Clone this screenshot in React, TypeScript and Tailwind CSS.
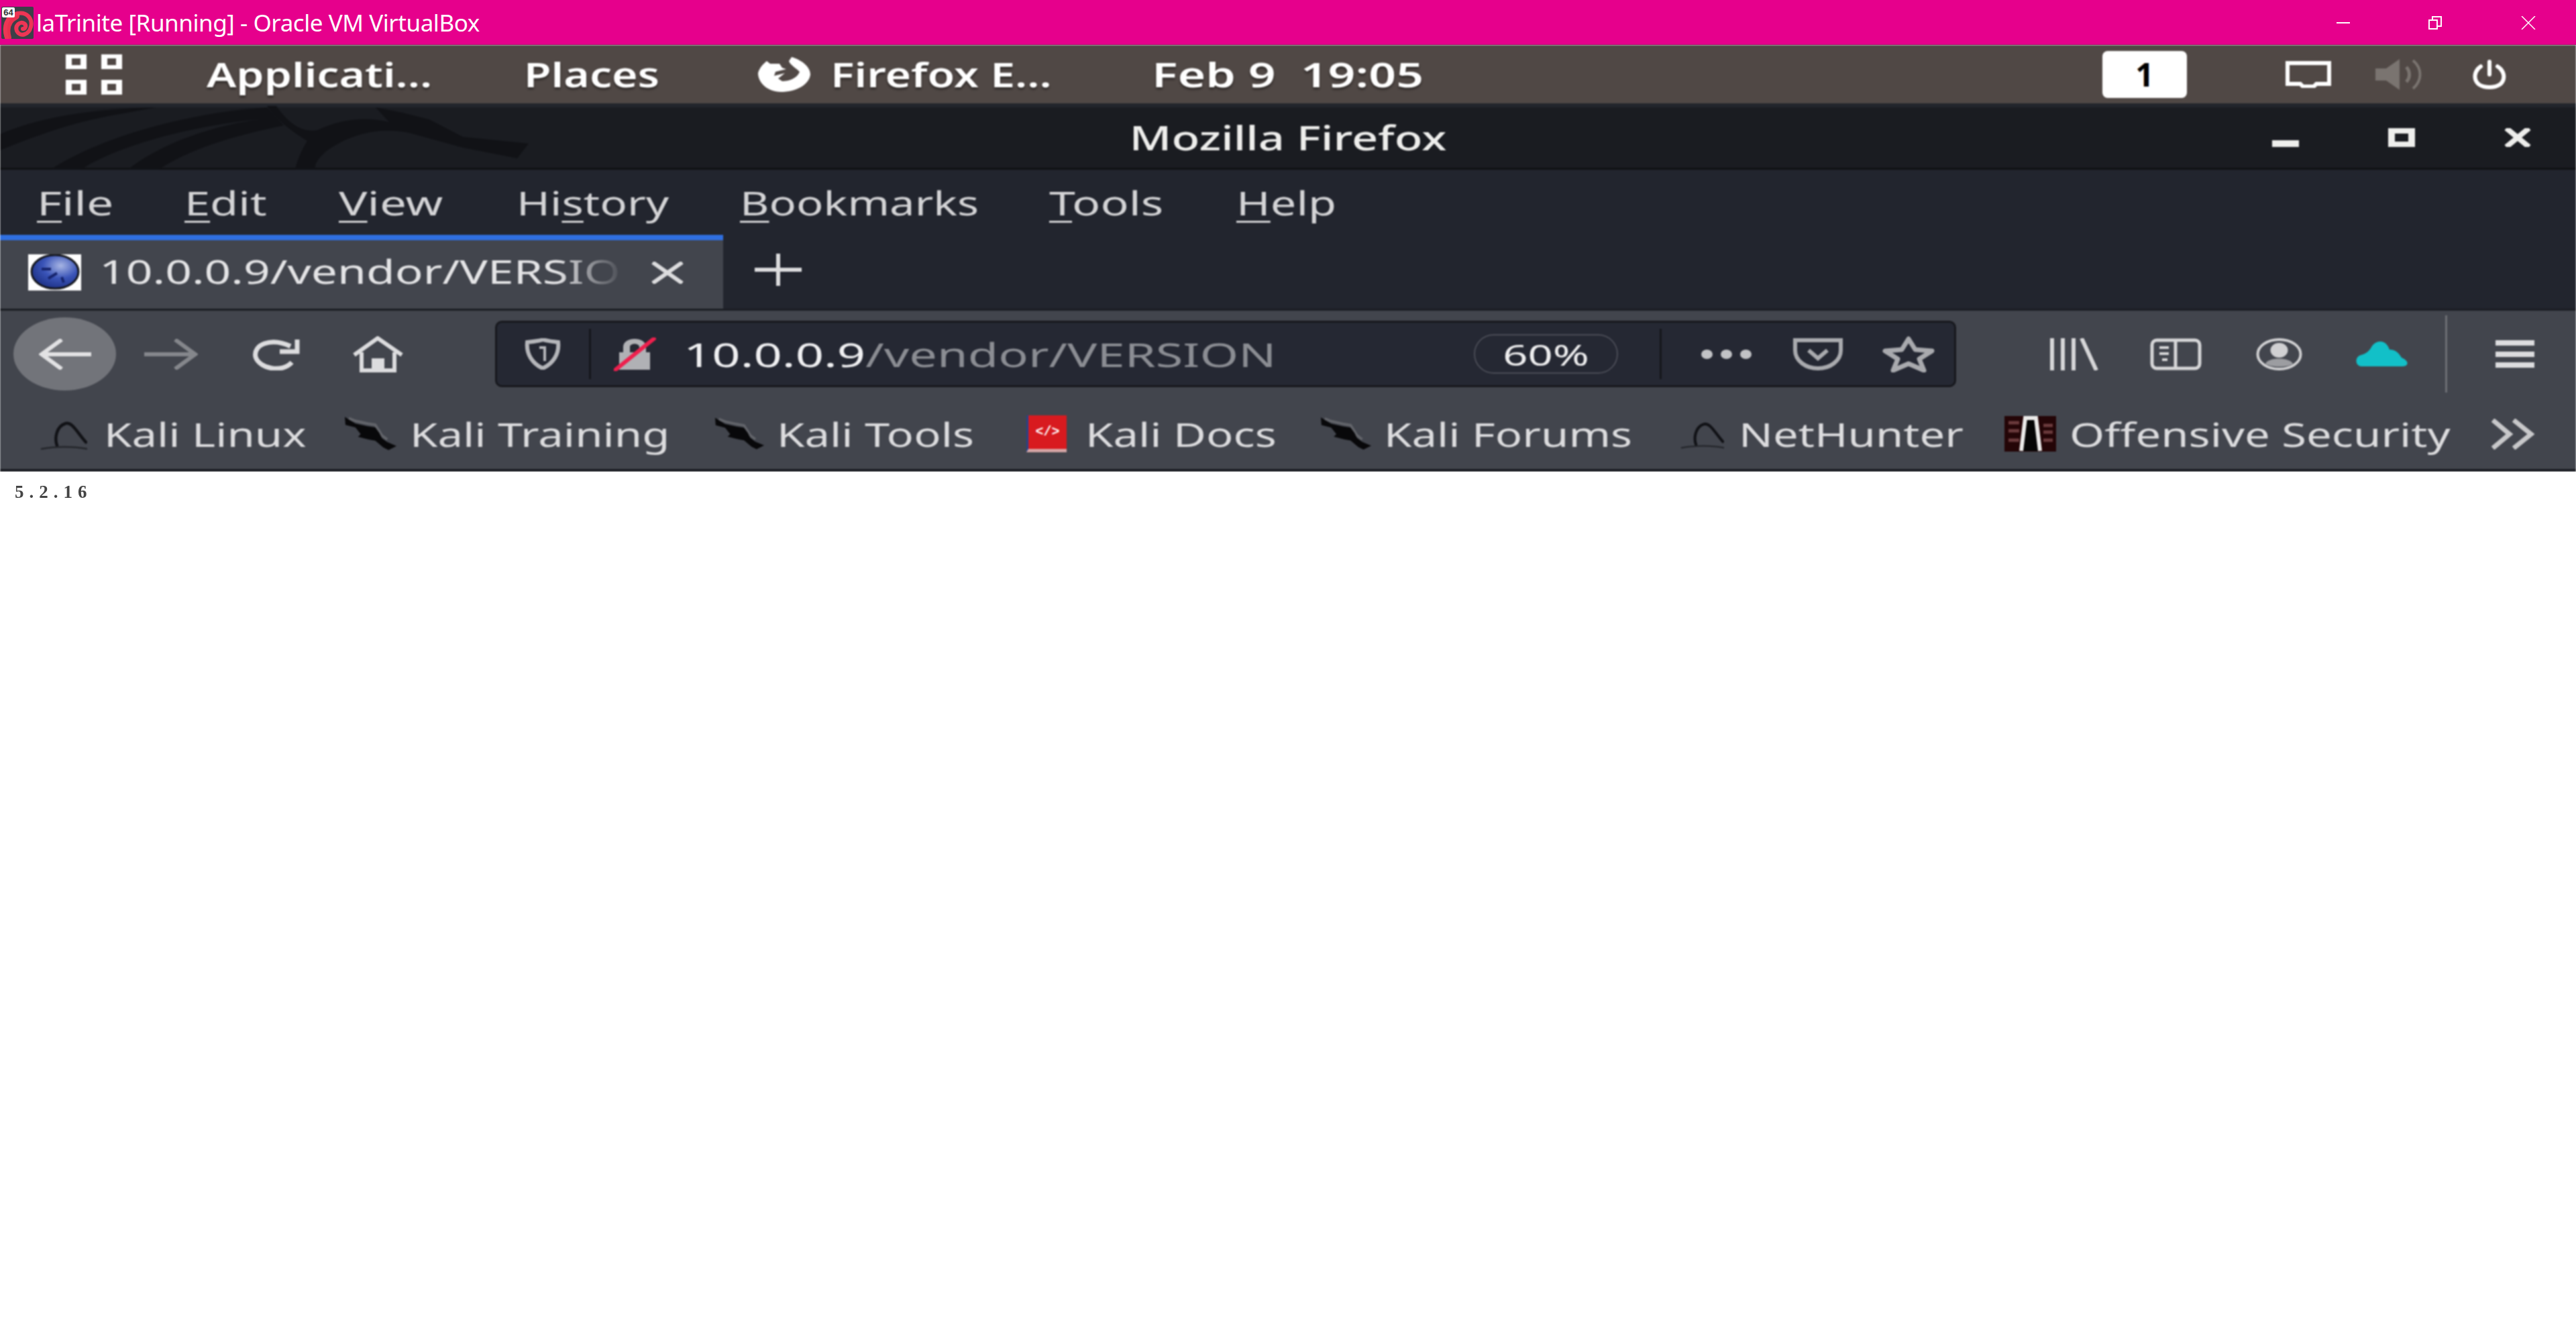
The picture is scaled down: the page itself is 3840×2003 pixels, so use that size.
import React from "react";

const Dagger = () => (
  <svg viewBox="0 0 80 55" className="h-[55px] w-full">
    <path d="M7 4 L17 8 L35 12 L47 14 L57 30 L65 36" fill="none" stroke="#62646a" strokeWidth="4" />
    <path d="M1 2 L7 6 L17 12 L35 16 L47 18 L53 26 L57 34 L65 40 L79 46 L67 52 L59 48 L47 38 L37 36 L21 32 L25 28 L17 18 L2 14 Z" fill="#08080a" />
  </svg>
);

const KaliBird = () => (
  <svg viewBox="0 0 70 55" className="h-[55px] w-full" fill="none" stroke="#111216" strokeLinecap="round">
    <path d="M25 45 C21 34 24 16 38 12 C48 10 54 24 68 40" strokeWidth="4.5" />
    <path d="M2 50 C22 46 50 46 70 50" strokeWidth="2.5" stroke="#23252a" />
  </svg>
);

function VBoxIcon() {
  return (
    <div className="relative ml-[2px] h-[48px] w-[48px] shrink-0 rounded-[2px] bg-[#3c4048]">
      <svg viewBox="0 0 48 48" className="h-full w-full" fill="none" strokeLinecap="round">
        <path d="M10 46 C6 32 10 20 22 14" stroke="#e8304f" strokeWidth="10" />
        <path d="M8 46 C3 32 6 14 24 10 C38 7 47 18 44 30 C41 42 28 46 23 36 C20 28 28 21 34 25 C38 28 36 33 32 33" stroke="#ee3555" strokeWidth="6" />
      </svg>
      <div className="absolute left-[1px] top-[1px] flex h-[15px] w-[19px] items-center justify-center rounded-[2px] bg-white font-['Liberation_Sans',sans-serif] text-[13px] font-bold leading-none text-[#333]">
        64
      </div>
    </div>
  );
}

function MenuText({ s, children }: { s: string; children: React.ReactNode }) {
  return <div className={`${s} origin-left whitespace-nowrap`}>{children}</div>;
}

function Menu({ w, ml, s, u, rest }: { w: string; ml: string; s: string; u: string; rest: string }) {
  return (
    <div className={`${w} ${ml} shrink-0`}>
      <MenuText s={s}>
        <span className="underline decoration-[3px] underline-offset-[8px]">{u}</span>
        {rest}
      </MenuText>
    </div>
  );
}

function Mark({ w, ml, children }: { w: string; ml: string; children: React.ReactNode }) {
  return (
    <div className={`${w} ${ml} shrink-0`}>
      <div className="origin-left scale-x-[1.34] whitespace-nowrap">{children}</div>
    </div>
  );
}

function PanelText({ w, ml, children }: { w: string; ml: string; children: React.ReactNode }) {
  return (
    <div className={`${w} ${ml} shrink-0`}>
      <div className="origin-left scale-x-[1.32] whitespace-pre">{children}</div>
    </div>
  );
}

export default function App() {
  return (
    <div className="flex h-[2003px] w-[3840px] flex-col overflow-hidden bg-white font-['Noto_Sans',sans-serif]">
      {/* VirtualBox title bar */}
      <header className="flex h-[67px] shrink-0 items-center bg-[#e6008c] text-white">
        <VBoxIcon />
        <div className="ml-[4px] w-[664px] whitespace-nowrap text-[35px] leading-none tracking-[-0.45px]">
          laTrinite [Running] - Oracle VM VirtualBox
        </div>
        <div className="ml-auto flex items-center pr-[60px]">
          <div className="h-[2px] w-[20px] bg-white" />
          <svg viewBox="0 0 20 20" className="ml-[117px] h-[20px] w-[20px]" fill="none" stroke="#fff" strokeWidth="2">
            <path d="M1 6 H13 V19 H1 Z M6 6 V1 H19 V15 H13" />
          </svg>
          <svg viewBox="0 0 22 20" className="ml-[118px] h-[20px] w-[22px]" fill="none" stroke="#fff" strokeWidth="1.5">
            <path d="M1 0 L21 20 M21 0 L1 20" />
          </svg>
        </div>
      </header>

      <div className="flex flex-col blur-[1px]">
        {/* GNOME panel */}
        <div className="flex h-[87px] shrink-0 items-center bg-[#504845] pl-[98px] text-[50px] font-semibold leading-none text-white [text-shadow:0_3px_3px_rgba(0,0,0,0.45)]">
          <div className="grid w-[84px] shrink-0 grid-cols-[31px_31px] justify-between gap-y-[16px]">
            <div className="h-[22px] border-x-[9px] border-y-[6px] border-white" />
            <div className="h-[22px] border-x-[9px] border-y-[6px] border-white" />
            <div className="h-[22px] border-x-[9px] border-y-[6px] border-white" />
            <div className="h-[22px] border-x-[9px] border-y-[6px] border-white" />
          </div>
          <PanelText w="w-[335px]" ml="ml-[126px]">Applicati...</PanelText>
          <PanelText w="w-[201px]" ml="ml-[138px]">Places</PanelText>
          <svg viewBox="0 0 120 80" className="ml-[128px] h-[80px] w-[120px] shrink-0">
            <path fill="#fff" d="M33 20 L38 24 L52 24 L56 30 L62 32 L46 36 L44 42 L60 38 L50 46 L56 50 C66 50 78 46 82 36 C76 30 68 26 66 20 L70 14 C84 18 98 28 98 40 C96 56 76 66 54 66 C34 66 20 52 20 38 C22 30 28 24 33 20 Z" />
          </svg>
          <PanelText w="w-[329px]" ml="ml-[8px]">Firefox E...</PanelText>
          <div className="ml-[150px] w-[403px] shrink-0">
            <div className="origin-left scale-x-[1.43] whitespace-pre">Feb 9  19:05</div>
          </div>
          <div className="ml-auto flex items-center pr-[100px]">
            <div className="flex h-[70px] w-[126px] shrink-0 items-center justify-center rounded-[8px] bg-white text-[48px] font-bold text-black [text-shadow:none]">
              1
            </div>
            <svg viewBox="0 0 68 40" className="ml-[147px] h-[40px] w-[68px] shrink-0" fill="none" stroke="#fff" strokeWidth="6">
              <path d="M3 3 H65 V34 H46 L42 38 H26 L22 34 H3 Z" />
            </svg>
            <svg viewBox="0 0 70 46" className="ml-[66px] h-[46px] w-[70px] shrink-0" fill="none">
              <path d="M0 14 H16 L36 0 V46 L16 32 H0 Z" fill="#7a7470" />
              <path d="M46 12 C52 18 52 28 46 34" stroke="#7a7470" strokeWidth="5" />
              <path d="M56 2 C70 14 70 32 56 44" stroke="#7a7470" strokeWidth="4" />
            </svg>
            <svg viewBox="0 0 59 44" className="ml-[70px] h-[44px] w-[59px] shrink-0" fill="none" stroke="#fff" strokeWidth="6" strokeLinecap="round">
              <path d="M17 10 C4 18 4 41 30 41 C56 41 56 18 42 10 M30 3 V22" />
            </svg>
          </div>
        </div>

        {/* Firefox title bar */}
        <div className="relative flex h-[99px] shrink-0 items-center border-t-[6px] border-t-[#22252c] border-b-[3px] border-b-[#101114] bg-[#1a1c21] text-[#eeeeec]">
          <svg viewBox="0 0 800 99" className="absolute left-0 top-[-6px] h-[99px] w-[800px]" fill="#111216">
            <path d="M0 46 C60 20 140 8 232 6 L190 14 C110 26 50 50 0 70 Z" />
            <path d="M75 99 C150 50 280 14 398 6 L423 33 C340 50 280 70 236 99 L190 99 C240 60 320 30 405 22 C300 30 180 60 120 99 Z" />
            <path d="M398 4 L412 4 C430 30 450 44 473 40 C510 22 550 20 580 28 L560 6 L600 14 L640 24 L690 50 L788 60 L771 82 L690 66 L610 44 C560 34 520 48 488 70 C476 80 468 90 470 99 L440 99 C444 80 452 66 458 56 C432 40 412 24 398 4 Z" />
          </svg>
          <div className="flex-1 pr-[67px]" />
          <div className="relative w-[468px] scale-x-[1.37] whitespace-nowrap text-center text-[50px] font-medium leading-none">Mozilla Firefox</div>
          <div className="relative flex flex-1 items-center justify-end pr-[67px]">
            <div className="mt-[18px] h-[10px] w-[40px] bg-[#eeeeec]" />
            <div className="ml-[133px] h-[28px] w-[40px] border-x-[10px] border-y-[8px] border-[#eeeeec]" />
            <svg viewBox="0 0 40 28" className="ml-[133px] h-[28px] w-[40px]" fill="none" stroke="#eeeeec" strokeWidth="8">
              <path d="M3 0 L37 28 M37 0 L3 28" />
            </svg>
          </div>
        </div>

        {/* Menu bar */}
        <div className="flex h-[97px] shrink-0 items-center bg-[#22252e] pl-[55px] text-[50px] leading-none text-[#d4d4d6]">
          <Menu w="w-[110px]" ml="ml-0" s="scale-x-[1.43]" u="F" rest="ile" />
          <Menu w="w-[123px]" ml="ml-[110px]" s="scale-x-[1.37]" u="E" rest="dit" />
          <Menu w="w-[155px]" ml="ml-[107px]" s="scale-x-[1.42]" u="V" rest="iew" />
          <div className="ml-[110px] w-[228px] shrink-0">
            <MenuText s="scale-x-[1.35]">
              Hi<span className="underline decoration-[3px] underline-offset-[8px]">s</span>tory
            </MenuText>
          </div>
          <Menu w="w-[350px]" ml="ml-[105px]" s="scale-x-[1.34]" u="B" rest="ookmarks" />
          <Menu w="w-[170px]" ml="ml-[111px]" s="scale-x-[1.4]" u="T" rest="ools" />
          <Menu w="w-[147px]" ml="ml-[109px]" s="scale-x-[1.37]" u="H" rest="elp" />
        </div>

        {/* Tab strip */}
        <div className="flex h-[110px] shrink-0 items-stretch bg-[#22252e]">
          <div className="flex w-[1078px] shrink-0 items-center border-t-[8px] border-t-[#2f6fe0] bg-[#42454d] pb-[6px] pl-[42px] text-[#e4e4e6]">
            <svg viewBox="0 0 79 54" className="h-[54px] w-[79px] shrink-0">
              <defs>
                <radialGradient id="ball" cx="0.62" cy="0.32" r="0.75">
                  <stop offset="0" stopColor="#a8b6e4" />
                  <stop offset="0.5" stopColor="#3a54b8" />
                  <stop offset="1" stopColor="#1a2d80" />
                </radialGradient>
              </defs>
              <rect width="79" height="54" fill="#fff" />
              <ellipse cx="40" cy="26" rx="35" ry="25" fill="url(#ball)" stroke="#14161c" strokeWidth="3" />
              <path d="M20 22 H34 M30 36 L43 28 M50 34 L53 42" fill="none" stroke="#16246c" strokeWidth="4" />
            </svg>
            <div className="relative mb-[4px] ml-[27px] h-[60px] w-[782px] shrink-0 overflow-hidden">
              <div className="origin-left scale-x-[1.39] whitespace-nowrap text-[50px] leading-[60px]">10.0.0.9/vendor/VERSION</div>
              <div className="absolute inset-y-0 right-0 w-[100px] bg-gradient-to-r from-transparent to-[#42454d]" />
            </div>
            <svg viewBox="0 0 50 33" className="ml-[40px] h-[33px] w-[50px] shrink-0" fill="none" stroke="#dcdcde" strokeWidth="6">
              <path d="M3 1 L47 32 M47 1 L3 32" />
            </svg>
          </div>
          <svg viewBox="0 0 70 48" className="mb-[6px] ml-[47px] h-[48px] w-[70px] shrink-0 self-center" fill="none" stroke="#dcdcde" strokeWidth="6">
            <path d="M0 24 H70 M35 0 V48" />
          </svg>
        </div>

        {/* Navigation toolbar */}
        <div className="flex h-[140px] shrink-0 items-center border-t-[3px] border-t-[#1b1d23] bg-[#42454d] pb-[8px] pl-[20px]">
          <div className="flex h-[109px] w-[153px] shrink-0 items-center justify-center rounded-[50%] bg-[#72747a]">
            <svg viewBox="0 0 78 46" className="h-[46px] w-[78px]" fill="none" stroke="#e2e2e4" strokeWidth="6">
              <path d="M78 23 H4 M34 1 L4 23 L34 45" />
            </svg>
          </div>
          <svg viewBox="0 0 80 46" className="ml-[42px] h-[46px] w-[80px] shrink-0" fill="none" stroke="#85878c" strokeWidth="6">
            <path d="M0 23 H76 M46 1 L76 23 L46 45" />
          </svg>
          <svg viewBox="0 0 73 48" className="ml-[80px] h-[48px] w-[73px] shrink-0" fill="none" stroke="#dcdcde" strokeWidth="7">
            <path d="M60 36 C46 52 12 46 6 28 C2 10 28 -2 58 12" />
            <path d="M68 2 V20 H42" />
          </svg>
          <svg viewBox="0 0 77 54" className="ml-[77px] h-[54px] w-[77px] shrink-0" fill="none" stroke="#dcdcde" strokeWidth="6">
            <path d="M3 28 L38 3 L74 28 M14 24 V51 H63 V24" />
            <path d="M32 52 V36 H45 V52" fill="#dcdcde" />
          </svg>

          {/* URL bar */}
          <div className="ml-[136px] flex h-[99px] w-[2178px] shrink-0 items-center rounded-[10px] border-[3px] border-[#17181d] bg-[#252833]">
            <svg viewBox="0 0 58 47" className="ml-[39px] h-[47px] w-[58px] shrink-0" fill="none" stroke="#b5b6ba" strokeWidth="6">
              <path d="M6 6 C18 5 28 3 29 2 C32 3 42 5 52 6 C54 24 44 38 29 45 C14 38 4 24 6 6 Z" />
              <path d="M24 14 H32 V34" strokeWidth="4" />
            </svg>
            <div className="ml-[40px] h-[75px] w-[3px] shrink-0 bg-[#15161b]" />
            <div className="relative ml-[34px] h-[50px] w-[63px] shrink-0">
              <svg viewBox="0 0 63 50" className="h-full w-full">
                <path d="M14 22 V14 C14 -2 48 -2 48 14 V22 H54 V48 H8 V22 Z M24 22 H38 V14 C38 8 24 8 24 14 Z" fill="#b0b1b5" fillRule="evenodd" />
                <path d="M0 50 L62 0" stroke="#ee1f4d" strokeWidth="6" />
              </svg>
            </div>
            <div className="ml-[41px] w-[875px] shrink-0 text-[50px] leading-none text-[#8b8d93]">
              <div className="origin-left scale-x-[1.48] whitespace-nowrap">
                <span className="text-[#f0f0f2]">10.0.0.9</span>/vendor/VERSION
              </div>
            </div>
            <div className="ml-[303px] flex h-[59px] w-[215px] shrink-0 items-center justify-center rounded-[30px] border-[2px] border-[#4a4c56] text-[44px] leading-none text-[#eeeeef]">
              <span className="scale-x-[1.48]">60%</span>
            </div>
            <div className="ml-[62px] h-[75px] w-[3px] shrink-0 bg-[#15161b]" />
            <div className="ml-[59px] flex w-[75px] shrink-0 justify-between">
              <div className="h-[14px] w-[17px] rounded-[50%] bg-[#c2c3c6]" />
              <div className="h-[14px] w-[17px] rounded-[50%] bg-[#c2c3c6]" />
              <div className="h-[14px] w-[17px] rounded-[50%] bg-[#c2c3c6]" />
            </div>
            <svg viewBox="0 0 76 48" className="ml-[61px] h-[48px] w-[76px] shrink-0" fill="none" stroke="#a9aaae" strokeWidth="6">
              <path d="M4 3 H72 V18 C72 34 56 45 38 45 C20 45 4 34 4 18 Z" />
              <path d="M24 18 L38 30 L52 18" />
            </svg>
            <svg viewBox="0 0 78 54" className="ml-[58px] h-[54px] w-[78px] shrink-0" fill="none" stroke="#a9aaae" strokeWidth="7" strokeLinejoin="round">
              <path d="M39 4 L49 20 L74 22 L55 34 L62 51 L39 41 L16 51 L23 34 L4 22 L29 20 Z" />
            </svg>
          </div>

          <svg viewBox="0 0 73 48" className="ml-[139px] h-[48px] w-[73px] shrink-0" fill="none" stroke="#d6d6d8" strokeWidth="6">
            <path d="M4 0 V48 M20 0 V48 M36 0 V48 M48 0 L70 48" />
          </svg>
          <svg viewBox="0 0 77 48" className="ml-[77px] h-[48px] w-[77px] shrink-0" fill="none" stroke="#d6d6d8" strokeWidth="5">
            <rect x="3" y="3" width="71" height="42" rx="7" />
            <path d="M38 3 V45" />
            <path d="M14 14 H28 M14 23 H28 M18 32 H26" strokeWidth="4" />
          </svg>
          <svg viewBox="0 0 69 48" className="ml-[81px] h-[48px] w-[69px] shrink-0" fill="none">
            <ellipse cx="34.5" cy="24" rx="32" ry="22" stroke="#d0d0d2" strokeWidth="4" />
            <ellipse cx="34.5" cy="18" rx="13" ry="11" fill="#d0d0d2" />
            <path d="M14 38 C18 28 50 28 55 38 C48 44 22 44 14 38 Z" fill="#9c9da1" />
          </svg>
          <svg viewBox="0 0 78 37" className="ml-[80px] h-[37px] w-[78px] shrink-0">
            <path d="M8 37 C-2 36 -2 22 8 20 C14 18 18 16 22 10 C26 2 32 0 36 0 C44 0 48 6 50 12 C60 12 64 18 68 24 C78 28 80 36 70 37 Z" fill="#12c0c8" />
          </svg>
          <div className="ml-[55px] h-[115px] w-[3px] shrink-0 bg-[#6d6f75]" />
          <div className="ml-[72px] flex h-[41px] w-[58px] shrink-0 flex-col justify-between">
            <div className="h-[8px] bg-[#dcdcde]" />
            <div className="h-[8px] bg-[#dcdcde]" />
            <div className="h-[8px] bg-[#dcdcde]" />
          </div>
        </div>

        {/* Bookmarks bar */}
        <div className="flex h-[103px] shrink-0 items-center border-b-[4px] border-b-[#1b1d23] bg-[#42454d] pb-[6px] pl-[60px] text-[50px] leading-none text-[#dcdcde]">
          <div className="w-[70px] shrink-0"><KaliBird /></div>
          <Mark w="w-[298px]" ml="ml-[25px]">Kali Linux</Mark>
          <div className="ml-[60px] w-[79px] shrink-0"><Dagger /></div>
          <Mark w="w-[390px]" ml="ml-[19px]">Kali Training</Mark>
          <div className="ml-[64px] w-[75px] shrink-0"><Dagger /></div>
          <Mark w="w-[303px]" ml="ml-[18px]">Kali Tools</Mark>
          <div className="ml-[69px] flex h-[55px] w-[60px] shrink-0 items-center justify-center border-l-[3px] border-l-[#25428a] border-b-[5px] border-b-[#d5a5a5] bg-[#d81a1f] font-['Liberation_Mono',monospace] text-[20px] font-bold leading-none text-white">
            &lt;/&gt;
          </div>
          <Mark w="w-[288px]" ml="ml-[28px]">Kali Docs</Mark>
          <div className="ml-[62px] w-[77px] shrink-0"><Dagger /></div>
          <Mark w="w-[372px]" ml="ml-[18px]">Kali Forums</Mark>
          <div className="ml-[70px] w-[65px] shrink-0"><KaliBird /></div>
          <Mark w="w-[338px]" ml="ml-[22px]">NetHunter</Mark>
          <div className="ml-[58px] h-[53px] w-[77px] shrink-0">
            <svg viewBox="0 0 77 53" className="h-full w-full">
              <rect width="77" height="53" fill="#240507" />
              <path d="M6 10 H22 M6 22 H22 M6 36 H22 M58 14 H72 M58 24 H72 M58 36 H72" stroke="#6b3a3c" strokeWidth="5" fill="none" />
              <path d="M25 52 L31 3 H47 L53 52 Z" fill="#050505" />
              <path d="M25 52 L31 3 H47 L53 52" stroke="#ecebea" strokeWidth="6" fill="none" />
            </svg>
          </div>
          <Mark w="w-[571px]" ml="ml-[20px]">Offensive Security</Mark>
          <svg viewBox="0 0 65 46" className="ml-[57px] h-[46px] w-[65px] shrink-0" fill="none" stroke="#c8c8ca" strokeWidth="7">
            <path d="M3 2 L28 23 L3 44 M34 2 L60 23 L34 44" />
          </svg>
        </div>
      </div>

      {/* Page content */}
      <main className="flex-1 bg-white pl-[22px] pt-[17px] blur-[0.6px]">
        <div className="font-['Liberation_Serif',serif] text-[27px] font-bold leading-none tracking-[8px] text-[#444]">5.2.16</div>
      </main>
    </div>
  );
}
